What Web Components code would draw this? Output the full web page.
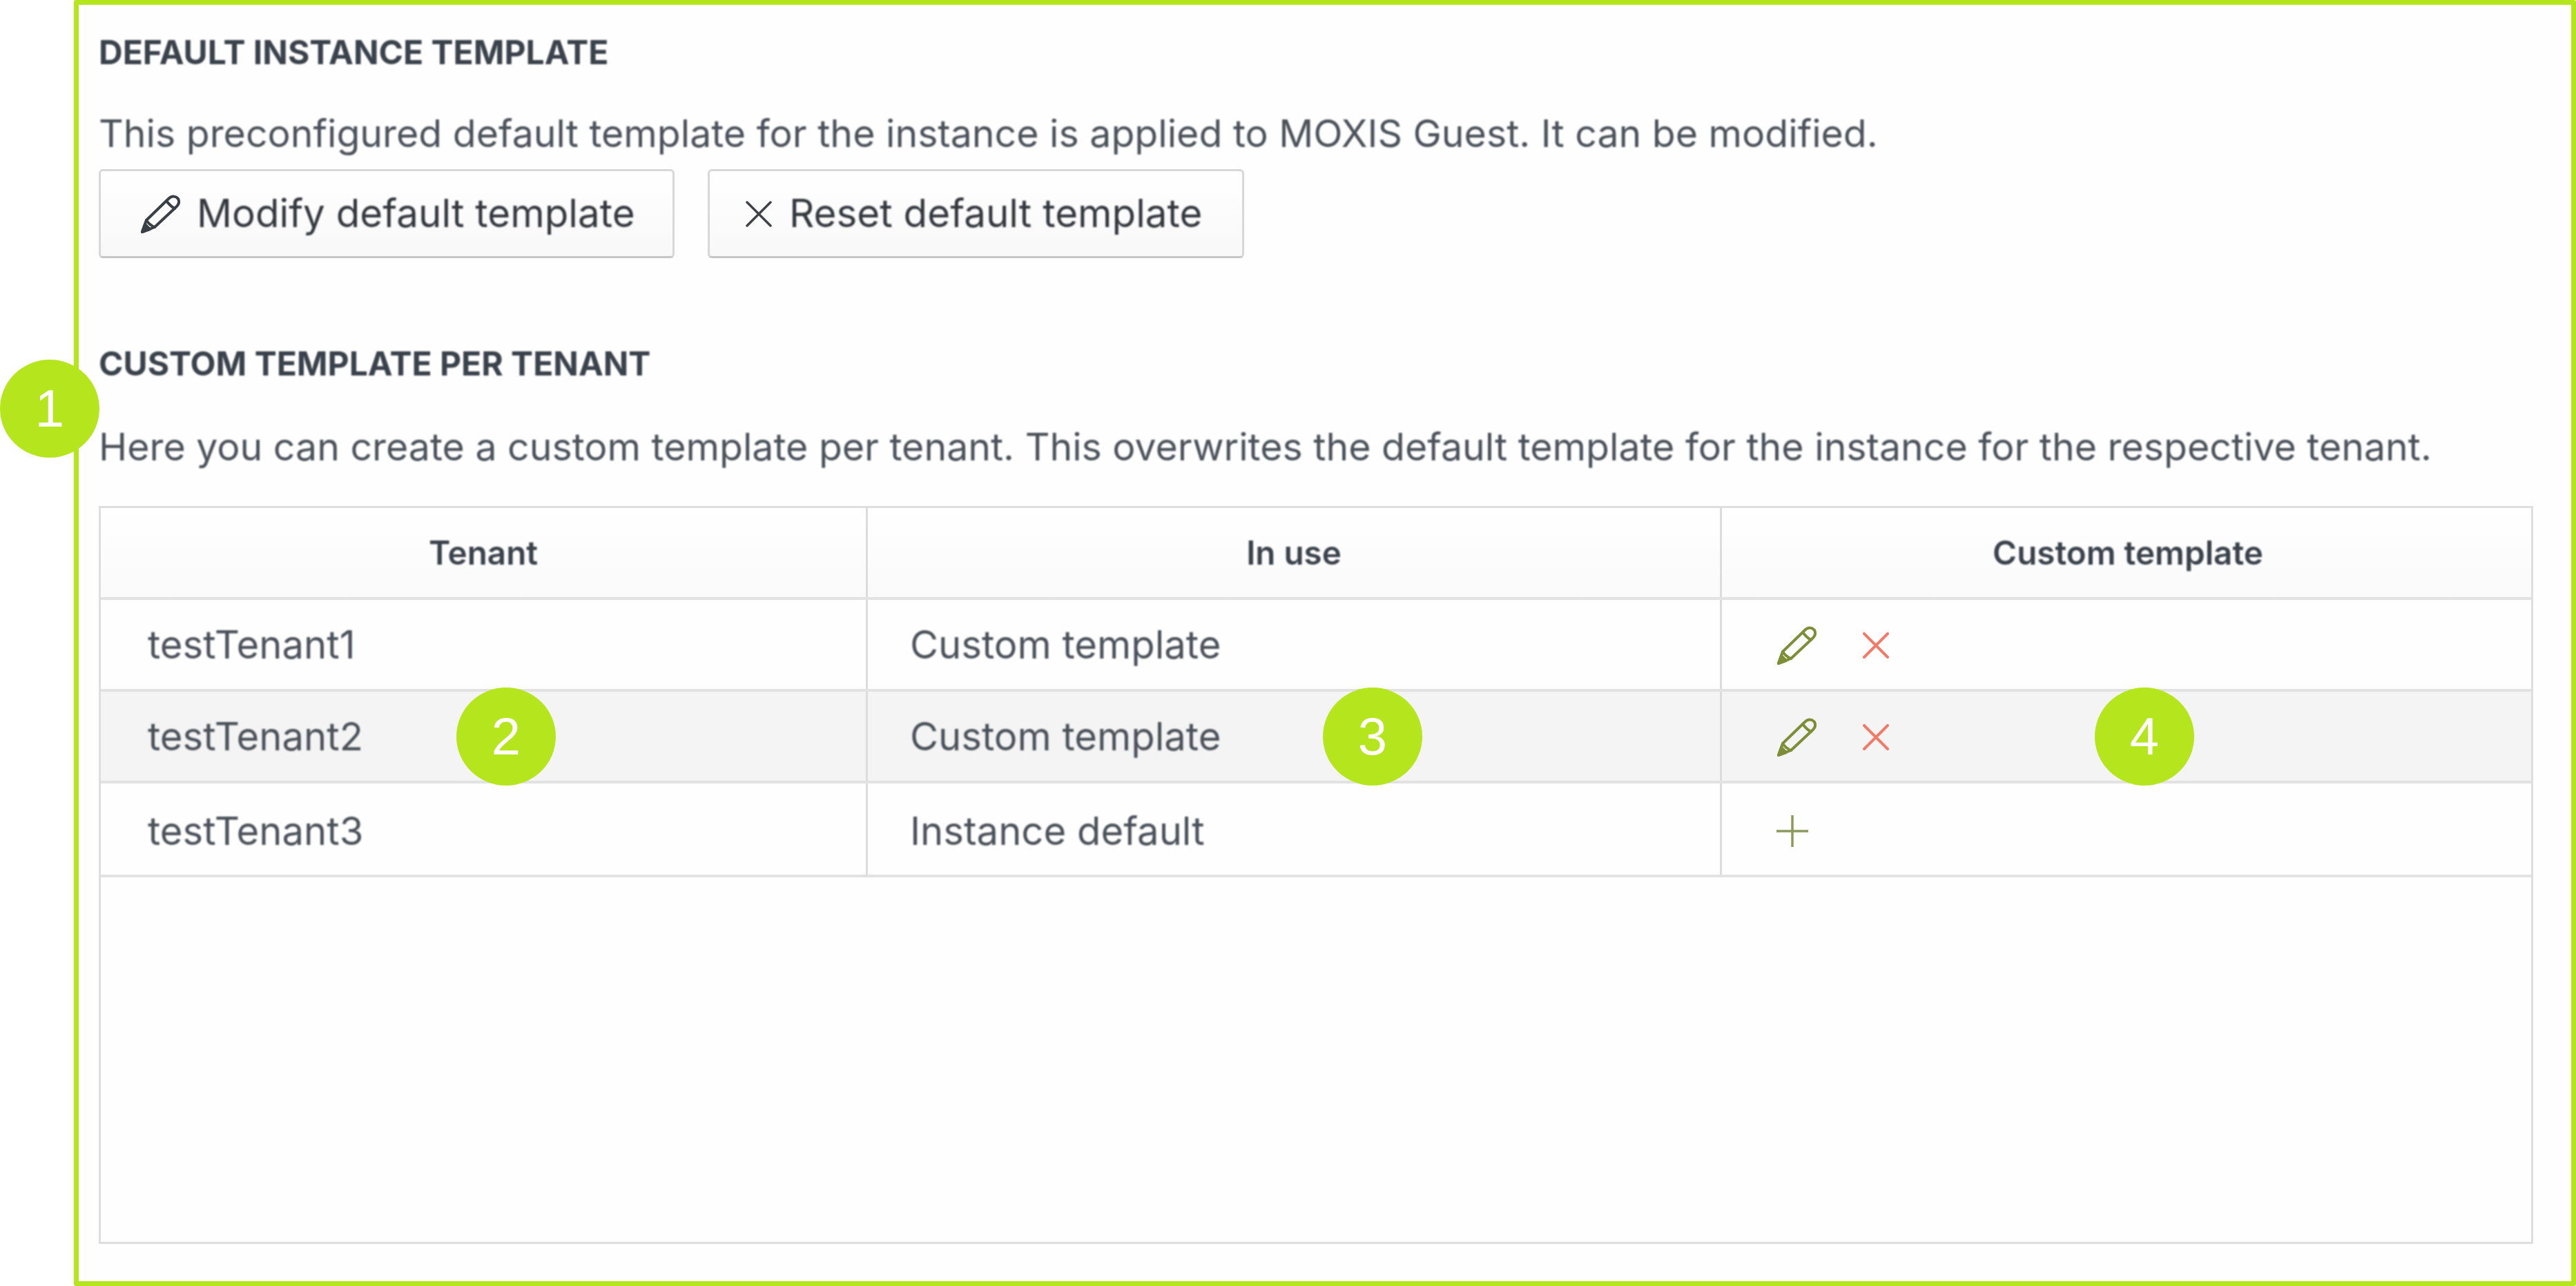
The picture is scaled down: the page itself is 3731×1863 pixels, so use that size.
<!doctype html>
<html>
<head>
<meta charset="utf-8">
<title>Default instance template</title>
<style>
  html, body { margin: 0; background: #fff; }
</style>
</head>
<body>
<settings-page>
  <section-block heading="DEFAULT INSTANCE TEMPLATE" text="This preconfigured default template for the instance is applied to MOXIS Guest. It can be modified.">
    <div style="display:flex;gap:48px">
      <action-button icon="pencil" style="width:834px">Modify default template</action-button>
      <action-button icon="cross" style="width:777px">Reset default template</action-button>
    </div>
  </section-block>
  <section-block class="grow" heading="CUSTOM TEMPLATE PER TENANT" text="Here you can create a custom template per tenant. This overwrites the default template for the instance for the respective tenant.">
    <tenant-table>
      <tenant-row tenant="testTenant1" use="Custom template" mode="edit"></tenant-row>
      <tenant-row tenant="testTenant2" use="Custom template" mode="edit" shaded></tenant-row>
      <tenant-row tenant="testTenant3" use="Instance default" mode="add"></tenant-row>
    </tenant-table>
  </section-block>
  <step-badge slot="badges" style="left:0;top:521px">1</step-badge>
  <step-badge slot="badges" style="left:661px;top:996px">2</step-badge>
  <step-badge slot="badges" style="left:1916px;top:996px">3</step-badge>
  <step-badge slot="badges" style="left:3034px;top:996px">4</step-badge>
</settings-page>

<script>
const ICONS = {
  pencil: (w, h, c) => `<svg width="${w}" height="${h}" viewBox="0 0 58 56" fill="none" stroke="${c}" stroke-width="4" stroke-linejoin="round" stroke-linecap="round" style="filter:blur(.6px)">
    <path d="M3 54 L9 37 L41 6 C46 1 52 2 55 6 C57 10 56 14 53 17 L21 47 Z"></path>
    <path d="M38 9 C41 13 46 18 50 20"></path>
    <path d="M9 37 C12 42 16 45 21 47"></path>
    <path d="M3 54 L7 43 L14 50 Z" fill="${c}"></path>
  </svg>`,
  cross: (w, h, c, sw) => `<svg width="${w}" height="${h}" viewBox="0 0 38 38" fill="none" stroke="${c}" stroke-width="${sw}" stroke-linecap="round" style="filter:blur(.6px)">
    <path d="M2 2 L36 36 M36 2 L2 36"></path>
  </svg>`,
  plus: (w, h, c) => `<svg width="${w}" height="${h}" viewBox="0 0 46 46" fill="none" stroke="${c}" stroke-width="3.5" style="filter:blur(.6px)">
    <path d="M23 0 V46 M0 23 H46"></path>
  </svg>`
}

const FONT = `Inter, "Liberation Sans", sans-serif`

class SettingsPage extends HTMLElement {
  constructor() {
    super()
    this.attachShadow({ mode: 'open' }).innerHTML = `
      <style>
        :host { display: block; position: relative; width: 3731px; height: 1863px; box-sizing: border-box; padding-left: 107px; font-family: ${FONT}; color: #4c525a; background: #fff; overflow: hidden; }
        .frame { height: 100%; box-sizing: border-box; border: 7px solid #b5e61d; border-radius: 3px; padding: 39px 55px 54px 29px; display: flex; flex-direction: column; background: #fefefe; }
        ::slotted(.grow) { flex: 1; min-height: 0; margin-top: 123px; }
      </style>
      <div class="frame"><slot></slot></div>
      <slot name="badges"></slot>`
  }
}

class SectionBlock extends HTMLElement {
  constructor() {
    super()
    this.attachShadow({ mode: 'open' }).innerHTML = `
      <style>
        :host { display: flex; flex-direction: column; }
        h2 { margin: 0; font: 700 48px/60px ${FONT}; color: #3a424b; filter: blur(.9px); white-space: nowrap; }
        p { margin: 52px 0 17px; font: 400 55.4px/70px ${FONT}; color: #4c525a; filter: blur(.9px); white-space: nowrap; }
        .body { flex: 1; min-height: 0; display: flex; flex-direction: column; }
        :host(.grow) p { margin: 55px 0 51px; }
      </style>
      <h2></h2><p></p><div class="body"><slot></slot></div>`
  }
  connectedCallback() {
    this.shadowRoot.querySelector('h2').textContent = this.getAttribute('heading')
    this.shadowRoot.querySelector('p').textContent = this.getAttribute('text')
  }
}

class ActionButton extends HTMLElement {
  constructor() {
    super()
    this.attachShadow({ mode: 'open' }).innerHTML = `
      <style>
        :host { display: flex; align-items: center; box-sizing: border-box; height: 129px; border: 3px solid #d8d8d8; border-bottom-color: #c6c6c6; border-radius: 6px; background: linear-gradient(#fff, #f8f8f8); color: #35393f; font: 400 56.5px/1 ${FONT}; }
        .icon { display: flex; flex: none; box-sizing: border-box; }
        :host([icon=pencil]) .icon { width: 139px; padding-left: 57px; }
        :host([icon=cross]) .icon { width: 115px; padding-left: 52px; }
        span { filter: blur(.8px); white-space: nowrap; }
      </style>
      <div class="icon"></div><span><slot></slot></span>`
  }
  connectedCallback() {
    const icon = this.getAttribute('icon')
    this.shadowRoot.querySelector('.icon').innerHTML = icon === 'pencil'
      ? ICONS.pencil(58, 56, '#3a3f45')
      : ICONS.cross(38, 38, '#3f4349', 3.5)
  }
}

class TenantTable extends HTMLElement {
  constructor() {
    super()
    this.attachShadow({ mode: 'open' }).innerHTML = `
      <style>
        :host { display: block; flex: 1; box-sizing: border-box; border: 3px solid #dedede; background: #fefefe; --cols: 1108px 1237px 1fr; }
        .head { display: grid; grid-template-columns: var(--cols); height: 129px; border-bottom: 4px solid #e2e2e2; background: linear-gradient(#fff, #fafafa); }
        .head div { display: flex; align-items: center; justify-content: center; font: 600 47.6px/1 ${FONT}; color: #3a424b; }
        .head div span { filter: blur(.8px); }
        .head div + div { border-left: 3px solid #dcdcdc; }
        .head div:last-child { padding-left: 4px; }
      </style>
      <div class="head"><div><span>Tenant</span></div><div><span>In use</span></div><div><span>Custom template</span></div></div>
      <slot></slot>`
  }
}

class TenantRow extends HTMLElement {
  constructor() {
    super()
    this.attachShadow({ mode: 'open' }).innerHTML = `
      <style>
        :host { display: grid; grid-template-columns: 1108px 1237px 1fr; height: 133px; box-sizing: border-box; border-bottom: 4px solid #e2e2e2; font: 400 56.2px/1 ${FONT}; color: #4c525a; }
        :host([shaded]) { background: #f4f4f4; }
        :host(:last-child) { height: 136px; }
        .cell { display: flex; align-items: center; box-sizing: border-box; padding: 2px 0 0 68px; }
        :host(:last-child) .cell { padding-top: 6px; }
        .cell + .cell { border-left: 3px solid #dcdcdc; padding-left: 61px; }
        .cell span { filter: blur(.8px); }
        .cell.actions { padding-left: 79px; gap: 67px; }
      </style>
      <div class="cell"><span class="tenant"></span></div>
      <div class="cell"><span class="use"></span></div>
      <div class="cell actions"></div>`
  }
  connectedCallback() {
    const root = this.shadowRoot
    root.querySelector('.tenant').textContent = this.getAttribute('tenant')
    root.querySelector('.use').textContent = this.getAttribute('use')
    root.querySelector('.actions').innerHTML = this.getAttribute('mode') === 'edit'
      ? ICONS.pencil(58, 56, '#7d8e36') + ICONS.cross(38, 38, '#ee7c68', 4)
      : ICONS.plus(46, 46, '#8b9a5c')
  }
}

class StepBadge extends HTMLElement {
  constructor() {
    super()
    this.attachShadow({ mode: 'open' }).innerHTML = `
      <style>
        :host { position: absolute; display: flex; align-items: center; justify-content: center; width: 144px; height: 142px; border-radius: 50%; background: #b5e61d; color: #fff; font: 400 76px/1 "Liberation Sans", sans-serif; }
      </style>
      <slot></slot>`
  }
}

customElements.define('settings-page', SettingsPage)
customElements.define('section-block', SectionBlock)
customElements.define('action-button', ActionButton)
customElements.define('tenant-table', TenantTable)
customElements.define('tenant-row', TenantRow)
customElements.define('step-badge', StepBadge)
</script>
</body>
</html>
